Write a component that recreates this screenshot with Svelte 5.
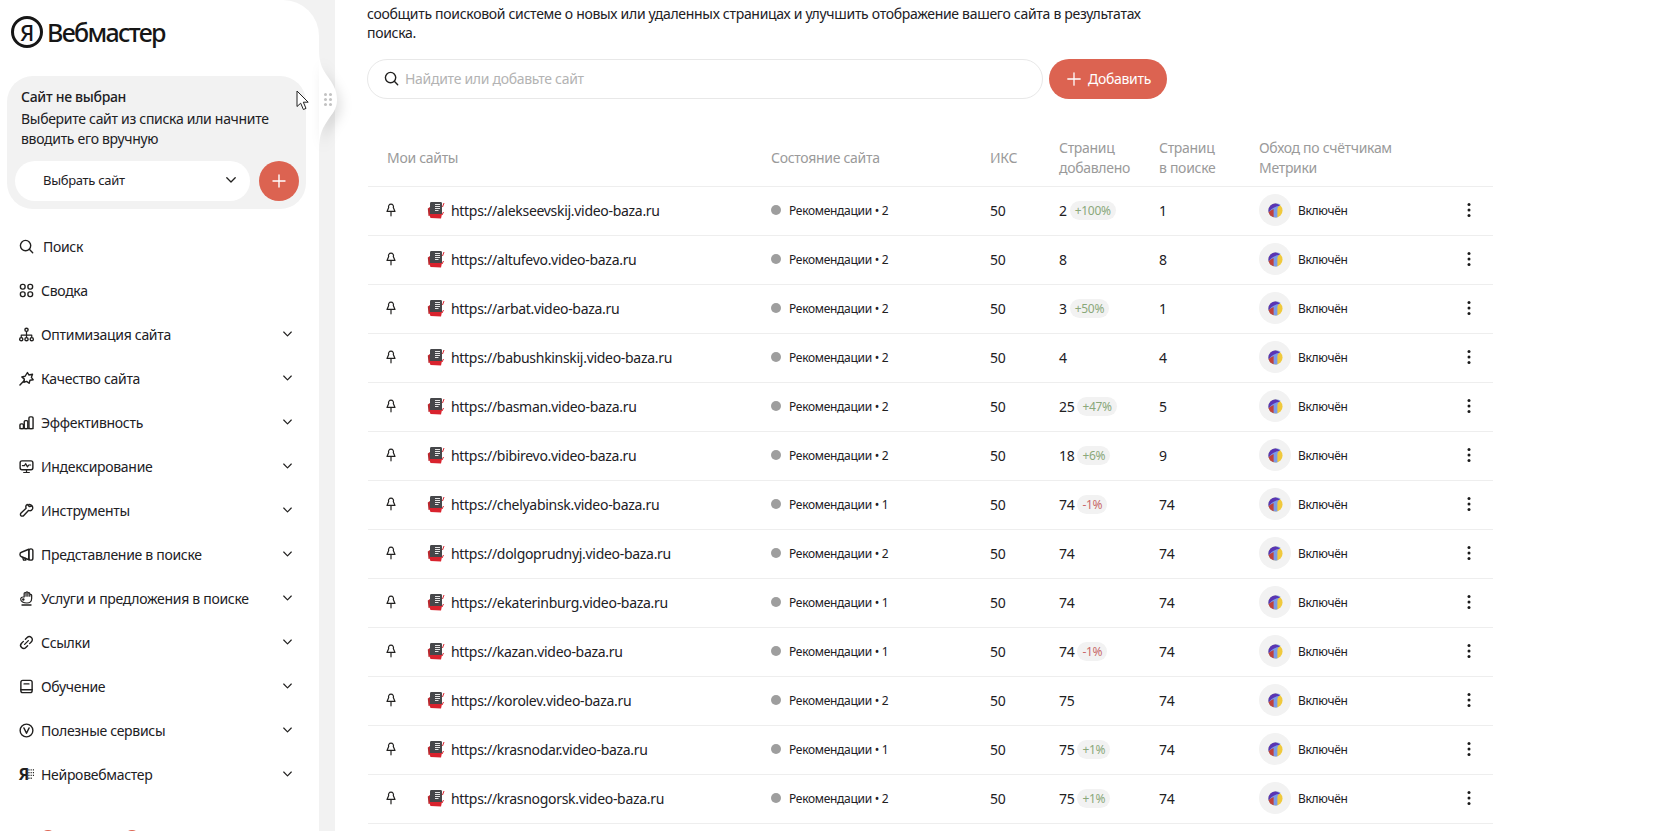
<script>
	const nav = [
		{ label: 'Поиск', icon: 'search', wide: true },
		{ label: 'Сводка', icon: 'grid' },
		{ label: 'Оптимизация сайта', icon: 'tree', more: true },
		{ label: 'Качество сайта', icon: 'star', more: true },
		{ label: 'Эффективность', icon: 'bars', more: true },
		{ label: 'Индексирование', icon: 'monitor', more: true },
		{ label: 'Инструменты', icon: 'wrench', more: true },
		{ label: 'Представление в поиске', icon: 'horn', more: true },
		{ label: 'Услуги и предложения в поиске', icon: 'hand', more: true },
		{ label: 'Ссылки', icon: 'link', more: true },
		{ label: 'Обучение', icon: 'book', more: true },
		{ label: 'Полезные сервисы', icon: 'services', more: true },
		{ label: 'Нейровебмастер', icon: 'neuro', more: true }
	];

	const sites = [
		{ name: 'alekseevskij', rec: 2, added: 2, delta: '+100%', found: 1 },
		{ name: 'altufevo', rec: 2, added: 8, found: 8 },
		{ name: 'arbat', rec: 2, added: 3, delta: '+50%', found: 1 },
		{ name: 'babushkinskij', rec: 2, added: 4, found: 4 },
		{ name: 'basman', rec: 2, added: 25, delta: '+47%', found: 5 },
		{ name: 'bibirevo', rec: 2, added: 18, delta: '+6%', found: 9 },
		{ name: 'chelyabinsk', rec: 1, added: 74, delta: '-1%', found: 74 },
		{ name: 'dolgoprudnyj', rec: 2, added: 74, found: 74 },
		{ name: 'ekaterinburg', rec: 1, added: 74, found: 74 },
		{ name: 'kazan', rec: 1, added: 74, delta: '-1%', found: 74 },
		{ name: 'korolev', rec: 2, added: 75, found: 74 },
		{ name: 'krasnodar', rec: 1, added: 75, delta: '+1%', found: 74 },
		{ name: 'krasnogorsk', rec: 2, added: 75, delta: '+1%', found: 74 }
	];
</script>

{#snippet navIcon(name)}
	<svg class="nav-icon" viewBox="0 0 16 16" fill="none" stroke="currentColor" stroke-width="1.5" stroke-linecap="round" stroke-linejoin="round">
		{#if name === 'search'}
			<circle cx="7" cy="7" r="5.5" /><path d="M11 11l3.6 3.6" />
		{:else if name === 'grid'}
			<rect x="1.5" y="1.5" width="5" height="5" rx="2.2" /><rect x="9.5" y="1.5" width="5" height="5" rx="2.2" />
			<rect x="1.5" y="9.5" width="5" height="5" rx="2.2" /><rect x="9.5" y="9.5" width="5" height="5" rx="2.2" />
		{:else if name === 'tree'}
			<circle cx="8" cy="3" r="1.7" /><circle cx="2.4" cy="13" r="1.7" /><circle cx="8" cy="13" r="1.7" /><circle cx="13.6" cy="13" r="1.7" />
			<path d="M8 5v6M2.4 11V8.6h11.2V11" stroke-width="1.3" />
		{:else if name === 'star'}
			<path d="M9 1.6l1.5 2.6 3.9-.8-1.200 3.400 2 2.600-3.500.5-.9 3.200-2.700-2-2.900.9.500-3.300-2.700-2.300 3.500-.8z" />
			<path d="M5.400 10.400L1 15" />
		{:else if name === 'bars'}
			<path d="M1 14.5h14" />
			<rect x="1" y="9.5" width="3.8" height="5" rx="1.2" /><rect x="5.6" y="6" width="3.8" height="8.5" rx="1.2" /><rect x="10.6" y="2" width="4.4" height="12.5" rx="1.2" />
		{:else if name === 'monitor'}
			<rect x="1.2" y="2" width="13.6" height="9.4" rx="2" />
			<path d="M3.6 7h2.2l1.4-2 1.800 3.400L10.400 6.400h2M5 14.400h6M8 11.400v3" stroke-width="1.3" />
		{:else if name === 'wrench'}
			<path d="M10.600 1.600a3.600 3.600 0 0 1 3.800 4.800c-.9 1.700-2.800 2.200-4.300 1.500l-5 5.400c-.8.9-2.200 1-3 .2s-.7-2.100.1-2.900l5.400-5c-.6-1.400-.2-3.200 1.300-4.100l2.300 2.400 1.600-.4" />
		{:else if name === 'horn'}
			<path d="M10.500 2.400L2.600 5.600C1.500 6 1 6.800 1 8s.5 2 1.600 2.400l7.900 3.200z" />
			<rect x="10.500" y="2" width="4.300" height="12" rx="2.100" /><path d="M4 11l.8 3h2.400l-.6-2" />
		{:else if name === 'hand'}
			<path d="M3.200 15h9.600" />
			<path d="M1.800 8.400c.2-1.400 1.400-2 2.700-2h1V2.600a1 1 0 0 1 2 0V5.500 1.800a1 1 0 0 1 2 0v3.700-2.700a1 1 0 0 1 2 0v2.700-1a1 1 0 0 1 2 0V8c0 2.800-2 4.800-5 4.800-3.400 0-6.900-1.500-6.700-4.400z" stroke-width="1.300" />
			<circle cx="4.600" cy="9" r="1.300" fill="currentColor" stroke="none" />
		{:else if name === 'link'}
			<path d="M6.800 4.600l1.900-1.900a3.200 3.200 0 0 1 4.600 4.500l-2 2" /><path d="M9.200 11.400l-1.900 1.900a3.200 3.200 0 0 1-4.600-4.500l2-2" /><path d="M6 10l4-4" />
		{:else if name === 'book'}
			<rect x="2" y="1.500" width="12" height="13" rx="2" /><path d="M2 11.400h12M5.400 5.200h5.200" />
		{:else if name === 'services'}
			<circle cx="8" cy="8" r="6.800" /><path d="M5.200 5.200L8 11l2.800-5.800" />
		{:else if name === 'neuro'}
			<text class="neuro-mark" x="-0.500" y="14" stroke="none" fill="currentColor">Я</text>
			<path d="M10 3h6M10 6h6M10 9h6M10 12h4" stroke-width="1.400" stroke-dasharray="1.200 1.200" stroke-linecap="butt" />
		{/if}
	</svg>
{/snippet}

{#snippet chevron()}
	<svg class="chevron" viewBox="0 0 10 6" fill="none" stroke="currentColor" stroke-width="1.300" stroke-linecap="round" stroke-linejoin="round">
		<path d="M.8.800L5 5l4.200-4.200" />
	</svg>
{/snippet}

<div class="page">
	<aside class="sidebar">
		<div class="logo">
			<span class="logo-mark">Я</span>
			<span class="logo-text">Вебмастер</span>
		</div>

		<div class="site-card">
			<div class="card-title">Сайт не выбран</div>
			<div class="card-text">Выберите сайт из списка или начните вводить его вручную</div>
			<div class="card-actions">
				<div class="site-select">
					<span>Выбрать сайт</span>
					{@render chevron()}
				</div>
				<div class="round-add">
					<svg viewBox="0 0 14 14" fill="none" stroke="currentColor" stroke-width="1.400" stroke-linecap="round"><path d="M7 1v12M1 7h12" /></svg>
				</div>
			</div>
		</div>

		<nav class="nav">
			{#each nav as item}
				<div class="nav-item" class:wide={item.wide}>
					{@render navIcon(item.icon)}
					<span class="nav-label">{item.label}</span>
					{#if item.more}
						{@render chevron()}
					{/if}
				</div>
			{/each}
		</nav>

		<div class="sidebar-foot">
			<span class="foot-badge"></span>
			<span class="foot-badge"></span>
		</div>
	</aside>

	<div class="strip"></div>

	<main class="main">
		<p class="intro">сообщить поисковой системе о новых или удаленных страницах и улучшить отображение вашего сайта в результатах поиска.</p>

		<div class="search-row">
			<div class="search-box">
				<svg class="search-icon" viewBox="0 0 16 16" fill="none" stroke="currentColor" stroke-width="1.500" stroke-linecap="round"><circle cx="7" cy="7" r="5.500" /><path d="M11 11l3.600 3.600" /></svg>
				<span>Найдите или добавьте сайт</span>
			</div>
			<div class="add-button">
				<svg viewBox="0 0 14 14" fill="none" stroke="currentColor" stroke-width="1.300" stroke-linecap="round"><path d="M7 .800v12.400M.800 7h12.400" /></svg>
				Добавить
			</div>
		</div>

		<div class="table">
			<div class="row head">
				<div class="cell-site head-site">Мои сайты</div>
				<div>Состояние сайта</div>
				<div>ИКС</div>
				<div>Страниц<br />добавлено</div>
				<div>Страниц<br />в поиске</div>
				<div>Обход по счётчикам<br />Метрики</div>
			</div>

			{#each sites as site}
				<div class="row">
					<div class="cell-site">
						<svg class="pin" viewBox="0 0 12 14" fill="none" stroke="currentColor" stroke-width="1.200" stroke-linejoin="round" stroke-linecap="round">
							<path d="M3.700 4.600a2.500 2.500 0 1 1 4.600 0L10 8.400H2zM6 8.400v4.400" />
						</svg>
						<svg class="favicon" viewBox="0 0 18 18">
							<path d="M0.800 7.500L3 6v8.500l-1.500.5z" fill="#b8282e" />
							<path d="M2 13h13l-1 4.500-10.500-.5z" fill="#d9232e" />
							<path d="M3 2.500C3 1.700 3.500 1 4.300 1h9.400c.8 0 1.300.7 1.300 1.500V13H3z" fill="#46474a" />
							<path d="M8 3.500h5M8 5.500h5M8 7.500h5M8 9.500h3.500" stroke="#e6e6e6" stroke-width="1" />
							<path d="M15.500 6l1.500-4M15 14l1.500-3" fill="none" stroke="#d9232e" stroke-width="1" />
						</svg>
						<span class="url">https://{site.name}.video-baza.ru</span>
					</div>
					<div class="status">
						<span class="dot"></span>
						<span>Рекомендации • {site.rec}</span>
					</div>
					<div>50</div>
					<div class="added">
						<span>{site.added}</span>
						{#if site.delta}
							<span class="delta" class:down={site.delta.startsWith('-')}>{site.delta}</span>
						{/if}
					</div>
					<div>{site.found}</div>
					<div class="metrika">
						<span class="metrika-badge">
							<svg viewBox="0 0 16 16">
								<circle cx="8" cy="8" r="7.500" fill="#f0c93c" />
								<path d="M8 .500A7.500 7.500 0 0 0 .500 8c0 4.100 3.400 7.500 7.500 7.500h2V6.500c0-1 .800-3 3.400-4.600A7.400 7.400 0 0 0 8 .500z" fill="#7b9be8" />
								<path d="M8 .500A7.500 7.500 0 0 0 .500 8c0 .700.100 1.400.300 2 1-2 2.800-3.800 5.200-5 2.400-1.200 4.500-1.800 6.800-2A7.400 7.400 0 0 0 8 .500z" fill="#5a35b4" />
								<path d="M.800 10C1.500 12.500 3.500 14.500 6 15.200V6.500C3.800 7.400 1.800 8.400.800 10z" fill="#c0423c" />
							</svg>
						</span>
						<span class="metrika-text">Включён</span>
						<svg class="kebab" viewBox="0 0 4 16" fill="#1a1a1a"><circle cx="2" cy="2.500" r="1.500" /><circle cx="2" cy="8" r="1.500" /><circle cx="2" cy="13.500" r="1.500" /></svg>
					</div>
				</div>
			{/each}
		</div>
	</main>

	<svg class="bump" viewBox="0 0 40 100" width="40" height="100">
		<path d="M0 0c0 14 4 20 9 27 4 6 9 12 9 23 0 9-5 14-9 20C4 77 0 84 0 100z" fill="#fff" />
	</svg>
	<span class="grip"></span>
	<svg class="cursor" viewBox="0 0 13 21" width="13" height="21">
		<path d="M1 1v15.500l3.700-3.300 2.700 6.300 2.600-1.100-2.700-6.200h4.900z" fill="#fff" stroke="#222" stroke-width="1" stroke-linejoin="round" />
	</svg>
</div>

<style>
	:global(html), :global(body) {
		margin: 0;
		height: 100%;
		overflow: hidden;
		background: #fff;
	}

	.page {
		position: relative;
		display: flex;
		height: 831px;
		overflow: hidden;
		font-family: 'Noto Sans', 'Liberation Sans', sans-serif;
		letter-spacing: -0.3px;
		color: #21201f;
	}

	.sidebar {
		width: 319px;
		flex-shrink: 0;
		box-sizing: border-box;
		padding: 16px 0 0 7px;
		background: #fff;
		border-top-right-radius: 36px;
		position: relative;
		z-index: 1;
	}

	.strip {
		width: 16px;
		flex-shrink: 0;
		margin-left: -40px;
		padding-left: 40px;
		background: #f2f2f2;
	}

	.logo {
		display: flex;
		align-items: center;
		gap: 4px;
		padding-left: 4px;
		height: 32px;
	}

	.logo-mark {
		width: 26px;
		height: 26px;
		border: 3px solid #161616;
		border-radius: 50%;
		display: flex;
		align-items: center;
		justify-content: center;
		font-size: 22px;
		font-weight: 500;
		color: #161616;
	}

	.logo-text {
		font-size: 25px;
		font-weight: 500;
		letter-spacing: -1.7px;
		color: #161616;
	}

	.site-card {
		margin-top: 28px;
		width: 299px;
		height: 133px;
		box-sizing: border-box;
		padding: 11px 7px 8px 8px;
		border-radius: 26px;
		background: #f2f2f2;
	}

	.card-title {
		padding-left: 6px;
		font-size: 14px;
		line-height: 20px;
		font-weight: 500;
	}

	.card-text {
		padding-left: 6px;
		margin-top: 2px;
		font-size: 14px;
		line-height: 20px;
	}

	.card-actions {
		display: flex;
		align-items: center;
		gap: 9px;
		margin-top: 12px;
	}

	.site-select {
		width: 235px;
		height: 40px;
		box-sizing: border-box;
		padding: 0 14px 2px 28px;
		display: flex;
		align-items: center;
		justify-content: space-between;
		border-radius: 20px;
		background: #fff;
		font-size: 13px;
	}

	.round-add {
		width: 40px;
		height: 40px;
		border-radius: 50%;
		background: #dc6351;
		color: #fff;
		display: flex;
		align-items: center;
		justify-content: center;
	}

	.round-add svg {
		width: 14px;
		height: 14px;
	}

	.chevron {
		width: 9px;
		height: 6px;
		flex-shrink: 0;
	}

	.site-select .chevron {
		width: 10px;
	}

	.nav {
		margin-top: 15px;
		padding-left: 12px;
		width: 273px;
	}

	.nav-item {
		height: 44px;
		display: flex;
		align-items: center;
		gap: 7px;
		font-size: 14px;
	}

	.nav-item.wide {
		gap: 9px;
	}

	.nav-icon {
		width: 15px;
		height: 15px;
		flex-shrink: 0;
		overflow: visible;
	}

	.nav-label {
		flex: 1;
	}

	.neuro-mark {
		font-size: 17px;
		font-weight: 700;
	}

	.sidebar-foot {
		display: flex;
		gap: 68px;
		padding-left: 33px;
		margin-top: 34px;
	}

	.foot-badge {
		width: 16px;
		height: 16px;
		border-radius: 50%;
		background: #dc6351;
	}

	.main {
		flex: 1;
		min-width: 0;
		padding: 4px 0 0 32px;
	}

	.intro {
		margin: 0;
		width: 780px;
		font-size: 14px;
		line-height: 19px;
	}

	.search-row {
		display: flex;
		gap: 6px;
		margin-top: 17px;
	}

	.search-box {
		width: 676px;
		height: 40px;
		box-sizing: border-box;
		padding: 0 16px 1px;
		display: flex;
		align-items: center;
		gap: 6px;
		border: 1px solid #e8e8e8;
		border-radius: 20px;
		font-size: 14px;
		color: #b3b3b3;
	}

	.search-icon {
		width: 15px;
		height: 15px;
		color: #21201f;
	}

	.add-button {
		width: 118px;
		height: 40px;
		box-sizing: border-box;
		padding: 0 0 1px 18px;
		display: flex;
		align-items: center;
		gap: 7px;
		border-radius: 20px;
		background: #dc6351;
		color: #fff;
		font-size: 14px;
	}

	.add-button svg {
		width: 14px;
		height: 14px;
	}

	.table {
		width: 1125px;
		margin-top: 39px;
		margin-left: 1px;
		font-size: 14px;
	}

	.row {
		display: grid;
		grid-template-columns: 403px 219px 69px 100px 100px 1fr;
		align-items: center;
		height: 49px;
		box-sizing: border-box;
		padding-bottom: 2px;
		border-bottom: 1px solid #eeeeee;
	}

	.row.head {
		height: 49px;
		padding-bottom: 9px;
		line-height: 20px;
		color: #9a9a9a;
	}

	.head-site {
		padding-left: 19px;
	}

	.cell-site {
		display: flex;
		align-items: center;
	}

	.pin {
		width: 12px;
		height: 14px;
		margin-left: 17px;
		flex-shrink: 0;
	}

	.favicon {
		width: 18px;
		height: 18px;
		margin-left: 30px;
		flex-shrink: 0;
	}

	.url {
		margin-left: 6px;
	}

	.status {
		display: flex;
		align-items: center;
		gap: 8px;
		font-size: 12px;
	}

	.dot {
		width: 10px;
		height: 10px;
		border-radius: 50%;
		background: #9e9e9e;
	}

	.added {
		display: flex;
		align-items: center;
		gap: 3px;
	}

	.delta {
		padding: 0 5px;
		height: 19px;
		line-height: 19px;
		border-radius: 10px;
		background: #f2f2f2;
		color: #8aa87a;
		font-size: 12px;
	}

	.delta.down {
		color: #c96a6a;
	}

	.metrika {
		display: flex;
		align-items: center;
		gap: 7px;
		padding-right: 22px;
	}

	.metrika-badge {
		width: 32px;
		height: 32px;
		border-radius: 50%;
		background: #f2f2f2;
		display: flex;
		align-items: center;
		justify-content: center;
	}

	.metrika-badge svg {
		width: 15px;
		height: 15px;
	}

	.metrika-text {
		flex: 1;
		font-size: 12px;
	}

	.kebab {
		width: 4px;
		height: 16px;
	}

	.bump {
		position: absolute;
		left: 319px;
		top: 50px;
		z-index: 2;
		filter: drop-shadow(4px 6px 6px rgba(0, 0, 0, 0.12));
	}

	.grip {
		position: absolute;
		left: 324px;
		top: 93px;
		z-index: 3;
		width: 3px;
		height: 3px;
		border-radius: 50%;
		background: #c2c2c2;
		box-shadow: 5px 0 #c2c2c2, 0 5px #c2c2c2, 5px 5px #c2c2c2, 0 10px #c2c2c2, 5px 10px #c2c2c2;
	}

	.cursor {
		position: absolute;
		left: 296px;
		top: 90px;
		z-index: 4;
	}
</style>
